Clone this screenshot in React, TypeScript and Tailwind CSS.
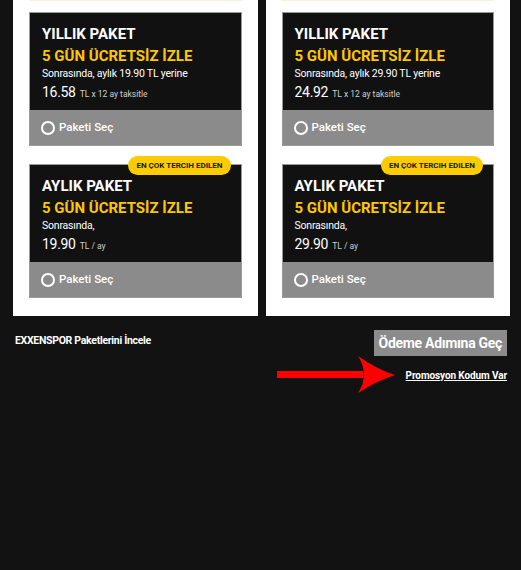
import React from 'react'

type Plan = {
  title: string
  note: string
  price: string
  unit: string
  badge?: boolean
}

const left: Plan[] = [
  { title: 'YILLIK PAKET', note: 'Sonrasında, aylık 19.90 TL yerine', price: '16.58', unit: 'TL x 12 ay taksitle' },
  { title: 'AYLIK PAKET', note: 'Sonrasında,', price: '19.90', unit: 'TL / ay', badge: true },
]

const right: Plan[] = [
  { title: 'YILLIK PAKET', note: 'Sonrasında, aylık 29.90 TL yerine', price: '24.92', unit: 'TL x 12 ay taksitle' },
  { title: 'AYLIK PAKET', note: 'Sonrasında,', price: '29.90', unit: 'TL / ay', badge: true },
]

function PlanCard({ plan }: { plan: Plan }) {
  return (
    <div className="relative border border-[#9a9a9a]">
      {plan.badge && (
        <div className="absolute right-[10px] top-[-9px] h-[19px] px-[8px] rounded-full bg-[#fccb00] flex items-center text-[8px] font-bold text-[#1a1a1a]">
          EN ÇOK TERCIH EDILEN
        </div>
      )}
      <div className="bg-[#111111] pl-[12px] pt-[11px] h-[97px]">
        <div className="text-[15px] leading-[20px] font-bold text-white">{plan.title}</div>
        <div className="text-[15px] leading-[19px] font-bold text-[#fcc800] mt-[3px]">5 GÜN ÜCRETSİZ İZLE</div>
        <div className="text-[10.5px] leading-[14px] tracking-[-0.2px] text-white mt-[1px]">{plan.note}</div>
        <div className="flex items-baseline gap-[4px] mt-[2px]">
          <span className="text-[14px] leading-[18px] tracking-[-0.3px] text-white">{plan.price}</span>
          <span className="text-[8.5px] leading-[18px] text-[#cfcfcf]">{plan.unit}</span>
        </div>
      </div>
      <div className="bg-[#8b8b8b] h-[35px] pl-[11px] flex items-center gap-[4px]">
        <span className="w-[14px] h-[14px] rounded-full border-2 border-white" />
        <span className="text-[11.5px] font-medium text-white">Paketi Seç</span>
      </div>
    </div>
  )
}

function Panel({ plans }: { plans: Plan[] }) {
  return (
    <div className="bg-white px-[16px] pb-[18px]">
      <div className="h-px bg-[#f7f2da]" />
      <div className="flex flex-col gap-[18px] mt-[11px]">
        {plans.map((p, i) => (
          <PlanCard key={i} plan={p} />
        ))}
      </div>
    </div>
  )
}

export default function App() {
  return (
    <div className="min-h-screen bg-[#121212] font-['Roboto',sans-serif]" style={{ width: 521, height: 570 }}>
      <div className="grid grid-cols-2 gap-[8px] pl-[13px] pr-[11px]">
        <Panel plans={left} />
        <Panel plans={right} />
      </div>

      <div className="flex justify-between pl-[15px] pr-[14px] mt-[14px]">
        <div className="text-[10.5px] tracking-[-0.3px] font-bold text-white mt-[3px]">EXXENSPOR Paketlerini İncele</div>
        <button className="bg-[#8b8b8b] h-[26px] px-[5px] text-[14px] tracking-[-0.3px] font-bold text-white">Ödeme Adımına Geç</button>
      </div>

      <div className="flex justify-end items-center gap-[10px] pr-[14px] mt-[-1px]">
        <svg width="120" height="40" viewBox="0 0 120 40">
          <rect x="1" y="16" width="86" height="7" fill="#ff0000" />
          <path d="M82 1 Q100 14 119 20 Q100 26 82 38 Q94 20 82 1 Z" fill="#ff0000" />
        </svg>
        <a href="#" className="text-[10px] tracking-[-0.1px] font-bold text-white underline">Promosyon Kodum Var</a>
      </div>
    </div>
  )
}
